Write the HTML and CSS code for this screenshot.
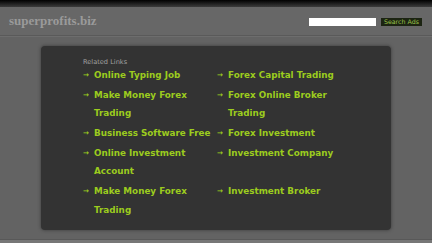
FILE: index.html
```html
<!DOCTYPE html>
<html>
<head>
<meta charset="utf-8">
<link rel="stylesheet" href="styles.css">
</head>
<body>
<div class="topbar"></div>
<header class="header">
  <div class="logo">superprofits.biz</div>
  <form class="search">
    <input class="search-input" type="text">
    <button class="search-btn" type="button">Search Ads</button>
  </form>
</header>
<main class="main">
  <section class="box">
    <div class="related">Related Links</div>
    <ul class="links">
      <li><span class="arrow">→</span><a>Online Typing Job</a></li>
      <li><span class="arrow">→</span><a>Forex Capital Trading</a></li>
      <li><span class="arrow">→</span><a>Make Money Forex Trading</a></li>
      <li><span class="arrow">→</span><a>Forex Online Broker Trading</a></li>
      <li><span class="arrow">→</span><a>Business Software Free</a></li>
      <li><span class="arrow">→</span><a>Forex Investment</a></li>
      <li><span class="arrow">→</span><a>Online Investment Account</a></li>
      <li><span class="arrow">→</span><a>Investment Company</a></li>
      <li><span class="arrow">→</span><a>Make Money Forex Trading</a></li>
      <li><span class="arrow">→</span><a>Investment Broker</a></li>
    </ul>
  </section>
</main>
<div class="footer"></div>
</body>
</html>
```
FILE: styles.css
```css
html, body {
  margin: 0;
  padding: 0;
  height: 100%;
}
body {
  background: #636363;
  font-family: "DejaVu Sans", sans-serif;
  display: flex;
  flex-direction: column;
  overflow: hidden;
}
.topbar {
  height: 7px;
  background: linear-gradient(#000 0%, #1e1e1e 50%, #3c3c3c 100%);
}
.header {
  height: 28px;
  background: #676767;
  border-bottom: 1px solid #5a5a5a;
  box-shadow: 0 1px 0 #6d6d6d;
  display: flex;
  align-items: center;
  padding: 0 10px 0 9px;
}
.logo {
  font-family: "Liberation Serif", serif;
  font-weight: bold;
  font-size: 13px;
  color: #9a9a9a;
  flex: 1;
  margin-top: -1px;
}
.search {
  display: flex;
  align-items: center;
  gap: 5px;
  margin: 0;
  margin-top: 1px;
}
.search-input {
  width: 67px;
  height: 8px;
  border: 0;
  padding: 0;
  margin: 0;
  background: #fff;
}
.search-btn {
  height: 8px;
  padding: 0 3px;
  border: 0;
  margin: 0;
  background: #1c2412;
  color: #9cc34a;
  font-family: "DejaVu Sans", sans-serif;
  font-size: 6.3px;
  line-height: 8px;
}
.main {
  flex: 1;
  padding: 10px 0 0 41px;
}
.box {
  width: 350px;
  height: 184px;
  box-sizing: border-box;
  background: #333333;
  border-radius: 4px;
  box-shadow: 0 0 3px 1px #4a4a4a;
  padding: 13px 0 0 42px;
}
.related {
  font-size: 6.6px;
  color: #a0a0a0;
  line-height: 7px;
}
.links {
  list-style: none;
  margin: 0;
  padding: 0;
  display: grid;
  grid-template-columns: 134px 134px;
  row-gap: 0.8px;
}
.links li {
  display: flex;
  font-size: 8.8px;
  font-weight: bold;
  line-height: 18.8px;
  color: #9ccc1e;
}
.arrow {
  width: 11px;
  flex: none;
  font-size: 7px;
}
.links a {
  width: 122px;
}
.footer {
  height: 3px;
  background: #777;
  border-top: 1px solid #585858;
}
```
